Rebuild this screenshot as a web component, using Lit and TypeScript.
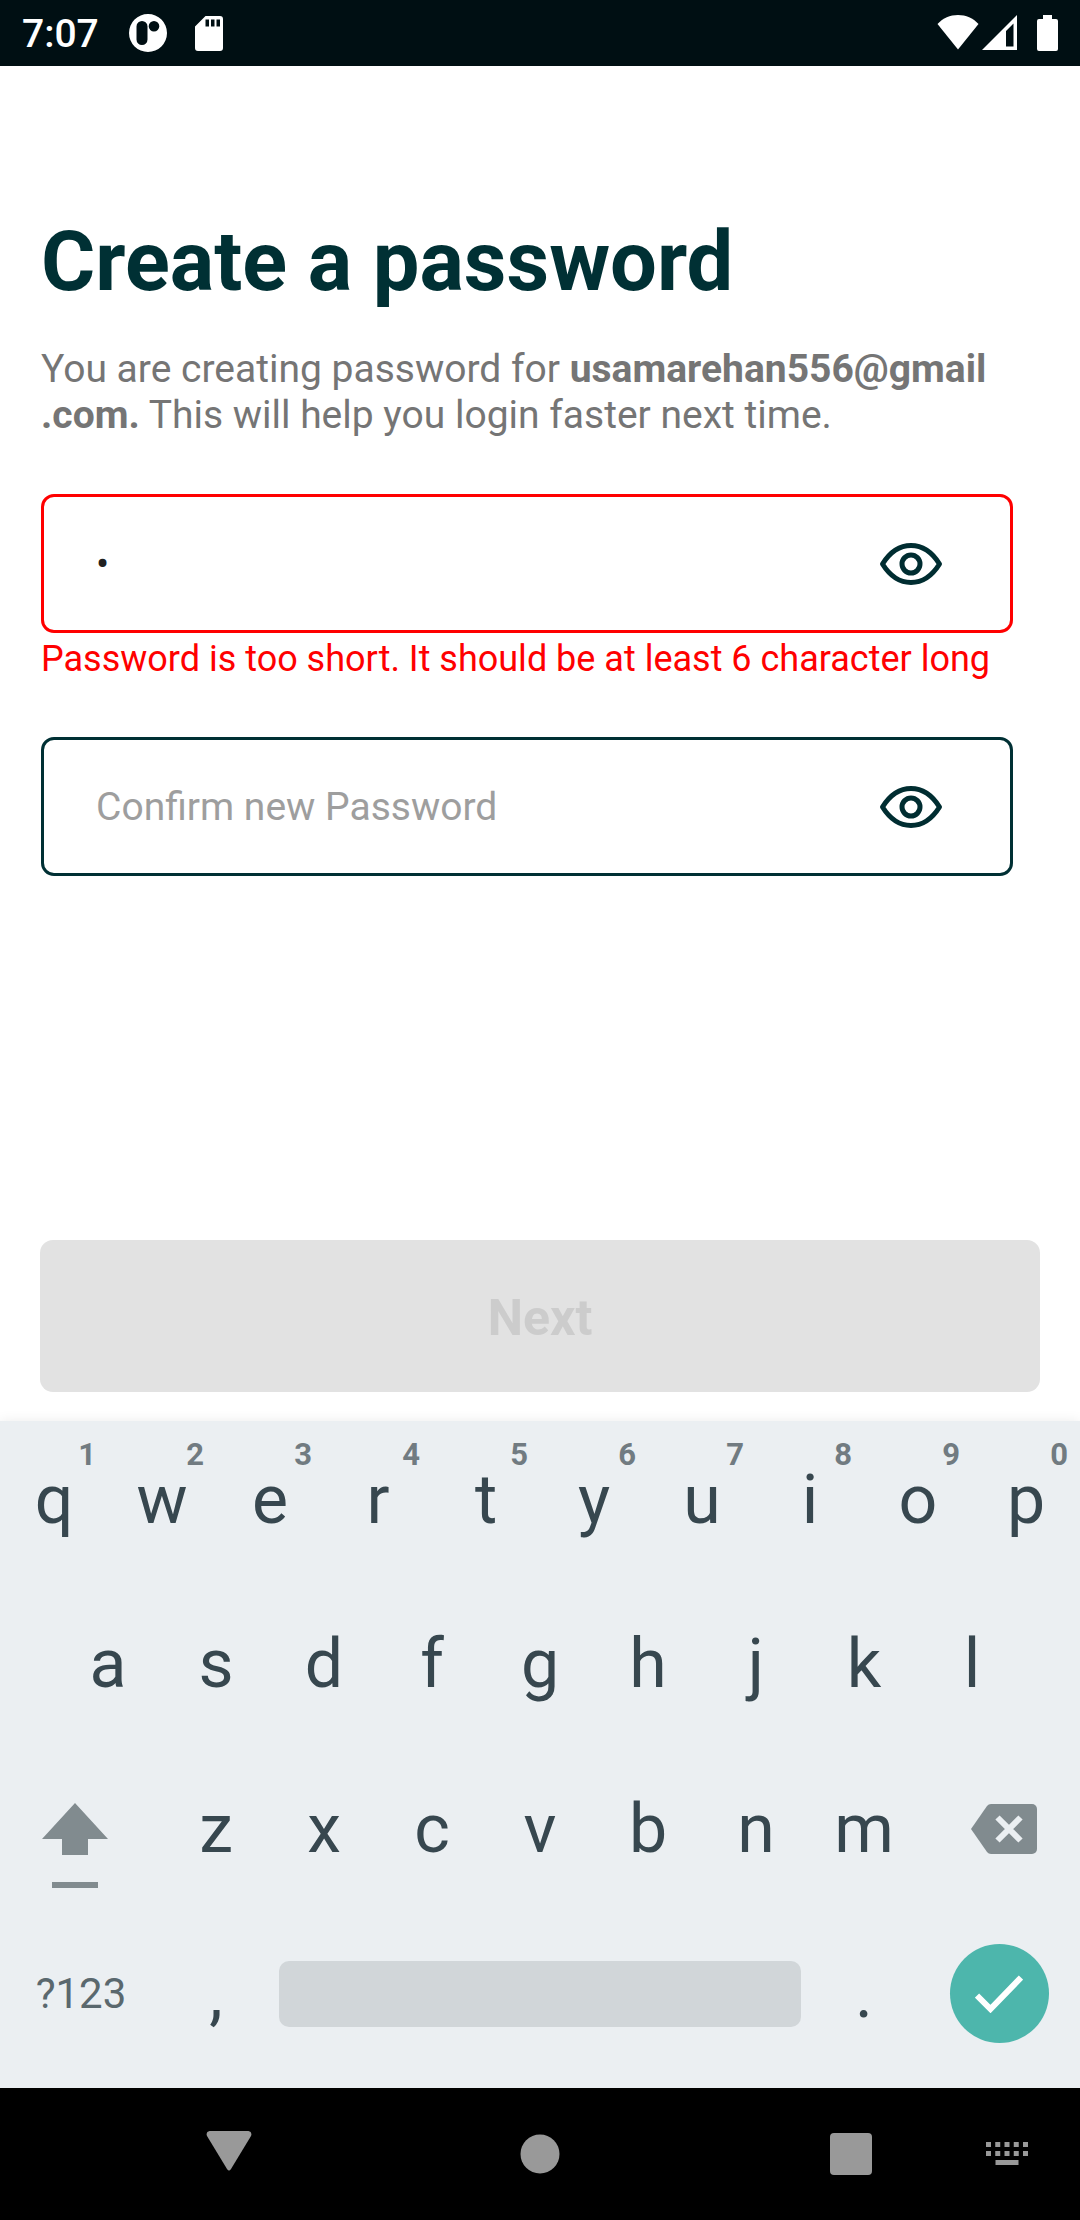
import { LitElement, html, css, svg } from "lit";
import { customElement, property, state } from "lit/decorators.js";
import { classMap } from "lit/directives/class-map.js";

@customElement("status-bar")
class StatusBar extends LitElement {
  static styles = css`
    :host {
      display: flex;
      justify-content: space-between;
      align-items: center;
      height: 66px;
      padding: 0 22px;
      background: #000f13;
      color: #fff;
    }
    .side {
      display: flex;
      align-items: center;
    }
    .clock {
      padding-top: 2px;
      font-size: 39px;
      line-height: 48px;
      font-weight: 500;
      margin-right: 30px;
    }
    .icon {
      display: block;
      fill: #fff;
    }
    .badge {
      margin-right: 28px;
    }
    .signal {
      margin: 0 20px 0 3px;
    }
  `;

  render() {
    return html`
      <div class="side">
        <span class="clock">7:07</span>
        <svg class="icon badge" width="38" height="38" viewBox="0 0 38 38" aria-hidden="true">
          <path fill-rule="evenodd" d="M19 0a19 19 0 1 1 0 38a19 19 0 0 1 0-38zM13 7a5.500 5.500 0 0 0-5.500 5.500v13a5.500 5.500 0 0 0 11 0v-13a5.500 5.500 0 0 0-5.500-5.500zM25 7a5.300 5.300 0 1 0 0 10.600a5.300 5.300 0 0 0 0-10.600z" />
        </svg>
        <svg class="icon" width="28" height="35" viewBox="0 0 28 35" aria-hidden="true">
          <path fill-rule="evenodd" d="M10.500 0H25a3 3 0 0 1 3 3v29a3 3 0 0 1-3 3H3a3 3 0 0 1-3-3V10.500zM10.500 3.500v7h3.500v-7zM16 3.500v7h3.500v-7zM21.500 3.500v7H25v-7z" />
        </svg>
      </div>
      <div class="side">
        <svg class="icon" width="42" height="36" viewBox="0 0 42 36" aria-hidden="true">
          <path d="M21 34.500L.5 9C6 3 13 0 21 0s15 3 20.500 9z" />
        </svg>
        <svg class="icon signal" width="35" height="36" viewBox="0 0 35 36" aria-hidden="true">
          <path fill-rule="evenodd" d="M0 35L35 0v35zM24 16v15.500h7.500V8.500z" />
        </svg>
        <svg class="icon" width="21" height="36" viewBox="0 0 21 36" aria-hidden="true">
          <path d="M6 0h9v4h4a2 2 0 0 1 2 2v28a2 2 0 0 1-2 2H2a2 2 0 0 1-2-2V6a2 2 0 0 1 2-2h4z" />
        </svg>
      </div>
    `;
  }
}

@customElement("password-field")
class PasswordField extends LitElement {
  @property() label = "";
  @property() value = "";
  @property() error = "";
  @state() private revealed = false;

  static styles = css`
    :host {
      display: block;
    }
    .box {
      box-sizing: border-box;
      display: flex;
      align-items: center;
      height: 139px;
      padding: 0 67px 0 52px;
      border: 3px solid #003034;
      border-radius: 13px;
    }
    .box.invalid {
      border-color: #ff0000;
    }
    .input {
      flex: 1;
      min-width: 0;
      height: 100%;
      padding: 0;
      border: 0;
      outline: 0;
      background: none;
      font-family: inherit;
      font-size: 39px;
      color: #212121;
    }
    .input::placeholder {
      color: #9e9e9e;
      opacity: 1;
    }
    .toggle {
      padding: 0;
      border: 0;
      background: none;
    }
    .eye {
      display: block;
      fill: none;
      stroke: #002d31;
      stroke-width: 5;
      stroke-linejoin: round;
    }
    .error {
      margin: 0;
      padding-top: 4px;
      font-size: 36px;
      line-height: 44px;
      color: #ff0000;
    }
  `;

  render() {
    return html`
      <div class=${classMap({ box: true, invalid: this.error !== "" })}>
        <input
          class="input"
          type=${this.revealed ? "text" : "password"}
          aria-label=${this.label}
          placeholder=${this.label}
          .value=${this.value}
        />
        <button
          class="toggle"
          type="button"
          aria-label="Show password"
          @click=${() => (this.revealed = !this.revealed)}
        >
          <svg class="eye" width="64" height="44" viewBox="0 0 64 44" aria-hidden="true">
            <path d="M3.500 22C11 10 20.500 3.500 32 3.500S53 10 60.500 22C53 34 43.500 40.500 32 40.500S11 34 3.500 22z" />
            <circle cx="32" cy="22" r="9" />
          </svg>
        </button>
      </div>
      ${this.error ? html`<p class="error">${this.error}</p>` : ""}
    `;
  }
}

const shiftIcon = svg`
  <svg class="icon shift" width="66" height="86" viewBox="0 0 66 86" aria-hidden="true">
    <path d="M33 0l33 36H46v16H20V36H0zM10 79h46v6H10z" />
  </svg>`;

const deleteIcon = svg`
  <svg class="icon" width="66" height="50" viewBox="0 0 66 50" aria-hidden="true">
    <path d="M20 0h41a5 5 0 0 1 5 5v40a5 5 0 0 1-5 5H20q-2.500 0-4-2L0 25L16 2q1.500-2 4-2z" />
    <path class="cross" d="M26.500 13.500l23 23m0-23l-23 23" />
  </svg>`;

const doneIcon = svg`
  <svg class="tick" width="48" height="38" viewBox="0 0 48 38" aria-hidden="true">
    <path d="M2 20.500l13.500 13.500L46 2.500" />
  </svg>`;

@customElement("soft-keyboard")
class SoftKeyboard extends LitElement {
  static styles = css`
    :host {
      display: block;
      padding-bottom: 12px;
      background: #ebeff2;
      box-shadow: 0 0 12px rgba(0, 0, 0, 0.08);
    }
    .row {
      display: grid;
      grid-template-columns: repeat(20, 1fr);
      height: 165px;
    }
    .row.top {
      height: 160px;
    }
    .key {
      position: relative;
      grid-column: span 2;
      display: flex;
      align-items: center;
      justify-content: center;
      padding: 0;
      border: 0;
      background: none;
      font-family: inherit;
      font-size: 68px;
      line-height: 80px;
      color: #37474f;
    }
    .row.top .key {
      padding-bottom: 2px;
    }
    .key.first {
      grid-column: 2 / span 2;
    }
    .key.wide {
      grid-column: span 3;
    }
    .key.mode {
      font-size: 42px;
      color: #5a686e;
    }
    .key.space {
      grid-column: span 10;
      padding: 0 9px;
    }
    .hint {
      position: absolute;
      top: 14px;
      right: 12px;
      font-size: 31px;
      line-height: 40px;
      font-weight: 700;
      color: #717b81;
    }
    .bar {
      flex: 1;
      height: 66px;
      border-radius: 10px;
      background: #d1d6d9;
    }
    .icon {
      display: block;
      fill: #818b8f;
    }
    .key.leading {
      justify-content: flex-start;
      padding-left: 42px;
    }
    .key.trailing {
      justify-content: flex-end;
      padding-right: 43px;
    }
    .shift {
      margin-top: 35px;
    }
    .cross {
      fill: none;
      stroke: #ebeff2;
      stroke-width: 6;
    }
    .done {
      display: flex;
      align-items: center;
      justify-content: center;
      width: 99px;
      height: 99px;
      border-radius: 50%;
      background: #4db6ac;
    }
    .tick {
      display: block;
      fill: none;
      stroke: #fff;
      stroke-width: 6;
    }
  `;

  render() {
    return html`
      <div class="row top">
        ${[..."qwertyuiop"].map(
          (k, i) => html`<button class="key" type="button">${k}<span class="hint">${(i + 1) % 10}</span></button>`
        )}
      </div>
      <div class="row">
        ${[..."asdfghjkl"].map(
          (k, i) => html`<button class=${classMap({ key: true, first: i === 0 })} type="button">${k}</button>`
        )}
      </div>
      <div class="row">
        <button class="key wide leading" type="button" aria-label="Shift">${shiftIcon}</button>
        ${[..."zxcvbnm"].map((k) => html`<button class="key" type="button">${k}</button>`)}
        <button class="key wide trailing" type="button" aria-label="Delete">${deleteIcon}</button>
      </div>
      <div class="row">
        <button class="key wide mode" type="button">?123</button>
        <button class="key" type="button">,</button>
        <button class="key space" type="button" aria-label="Space"><span class="bar"></span></button>
        <button class="key" type="button">.</button>
        <button class="key wide" type="button" aria-label="Done"><span class="done">${doneIcon}</span></button>
      </div>
    `;
  }
}

@customElement("nav-bar")
class NavBar extends LitElement {
  static styles = css`
    :host {
      display: grid;
      grid-template-columns: 149px 1fr 1fr 1fr 149px;
      align-items: center;
      height: 132px;
      background: #000;
    }
    .button {
      display: flex;
      justify-content: center;
      padding: 0;
      border: 0;
      background: none;
    }
    .button.back {
      grid-column: 2;
      justify-content: flex-start;
      padding: 0 0 6px 57px;
    }
    .button.recents {
      justify-content: flex-end;
      padding-right: 59px;
    }
    .button.switcher {
      justify-content: flex-end;
      padding-right: 51px;
    }
    .icon {
      display: block;
      fill: #999;
    }
  `;

  render() {
    return html`
      <button class="button back" type="button" aria-label="Back">
        <svg class="icon" width="46" height="40" viewBox="0 0 46 40" aria-hidden="true">
          <path d="M3.500 0h39q4 1 2.500 5L25 38q-2 3-4 0L1 5q-1.500-4 2.500-5z" />
        </svg>
      </button>
      <button class="button" type="button" aria-label="Home">
        <svg class="icon" width="40" height="40" viewBox="0 0 40 40" aria-hidden="true">
          <circle cx="20" cy="20" r="19.500" />
        </svg>
      </button>
      <button class="button recents" type="button" aria-label="Recents">
        <svg class="icon" width="42" height="42" viewBox="0 0 42 42" aria-hidden="true">
          <rect width="42" height="42" rx="4" />
        </svg>
      </button>
      <button class="button switcher" type="button" aria-label="Switch keyboard">
        <svg class="icon" width="43" height="24" viewBox="0 0 43 24" aria-hidden="true">
          ${[0, 9].map((y) =>
            [0, 9.25, 18.5, 27.75, 37].map((x) => svg`<rect x=${x} y=${y} width="5" height="5" />`)
          )}
          <rect x="9.500" y="18" width="23" height="5" />
        </svg>
      </button>
    `;
  }
}

@customElement("app-root")
class AppRoot extends LitElement {
  static styles = css`
    :host {
      display: flex;
      flex-direction: column;
      min-height: 100vh;
      background: #fff;
      font-family: Roboto, "Liberation Sans", sans-serif;
    }
    .page {
      flex: 1;
      display: flex;
      flex-direction: column;
      padding: 147px 40px 29px;
    }
    .title {
      margin: 0 1px;
      font-size: 83px;
      line-height: 98px;
      font-weight: 700;
      color: #003034;
    }
    .intro {
      margin: 35px 1px 0;
      font-size: 39px;
      line-height: 46px;
      color: #757575;
    }
    .fields {
      display: flex;
      flex-direction: column;
      gap: 56px;
      margin: 56px 27px 0 1px;
    }
    .next {
      height: 152px;
      margin-top: auto;
      padding: 3px 0 0;
      border: 0;
      border-radius: 13px;
      background: #e2e2e2;
      font-family: inherit;
      font-size: 50px;
      font-weight: 700;
      color: #cccccc;
    }
  `;

  render() {
    return html`
      <status-bar></status-bar>
      <main class="page">
        <h1 class="title">Create a password</h1>
        <p class="intro">
          You are creating password for <b>usamarehan556@gmail<wbr />.com.</b> This will help you login faster next
          time.
        </p>
        <div class="fields">
          <password-field
            label="New Password"
            value="a"
            error="Password is too short. It should be at least 6 character long"
          ></password-field>
          <password-field label="Confirm new Password"></password-field>
        </div>
        <button class="next" type="button" disabled>Next</button>
      </main>
      <soft-keyboard></soft-keyboard>
      <nav-bar></nav-bar>
    `;
  }
}
